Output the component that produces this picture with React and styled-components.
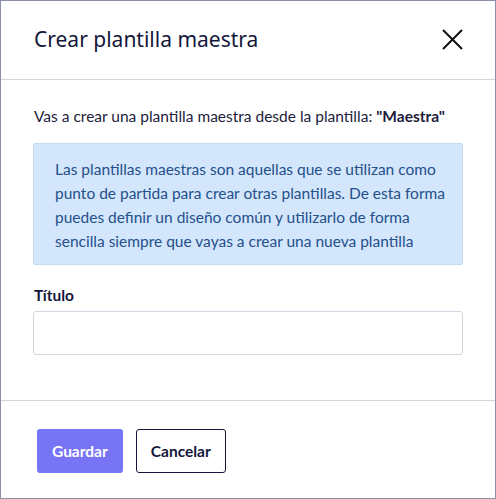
import React from "react"
import styled, { createGlobalStyle } from "styled-components"

const Global = createGlobalStyle`
  html, body {
    margin: 0;
    padding: 0;
    background: #ffffff;
  }
  * {
    box-sizing: border-box;
  }
`

const Modal = styled.div`
  width: 496px;
  height: 499px;
  border: 1px solid #8a8fa8;
  background: #ffffff;
  display: flex;
  flex-direction: column;
  font-family: "Lato", "Liberation Sans", sans-serif;
  color: #1b1d3a;
`

const Header = styled.div`
  height: 79px;
  flex: none;
  display: flex;
  align-items: center;
  justify-content: space-between;
  padding: 0 31px 2px 33px;
  border-bottom: 1px solid #d3d4e0;
`

const Title = styled.h1`
  margin: 0;
  font-family: "Noto Sans", sans-serif;
  font-weight: 400;
  font-size: 21px;
  color: #14173b;
`

const Close = styled.button`
  width: 24px;
  height: 24px;
  padding: 0;
  border: none;
  background: none;
  display: flex;
  align-items: center;
  justify-content: center;
  cursor: pointer;
`

const Body = styled.div`
  flex: 1;
  padding: 26px 32px 0 32px;
  border-bottom: 1px solid #d3d4e0;
`

const Intro = styled.p`
  margin: 0 0 17px 1px;
  font-size: 15.5px;
  line-height: 20px;
  color: #1b1d3a;

  b {
    font-weight: 700;
  }
`

const Info = styled.div`
  background: #d3e6fc;
  border: 1px solid #c3dbf7;
  border-radius: 2px;
  padding: 13px 4px 11px 21px;
  font-size: 15.5px;
  line-height: 24px;
  color: #24508a;
  white-space: nowrap;
`

const Label = styled.label`
  display: block;
  margin: 21px 0 7px 1px;
  font-size: 15.5px;
  font-weight: 700;
  color: #14173b;
`

const Input = styled.input`
  display: block;
  width: 100%;
  height: 44px;
  border: 1px solid #d3d5e3;
  border-radius: 3px;
  padding: 0 12px;
  font-family: inherit;
  font-size: 15px;
  outline: none;
`

const Footer = styled.div`
  height: 97px;
  flex: none;
  display: flex;
  align-items: flex-start;
  gap: 13px;
  padding: 28px 36px 0 36px;
`

const Button = styled.button`
  height: 44px;
  padding: 0 ${p => (p.$primary ? "15px" : "14px")};
  border-radius: 3px;
  font-family: "Lato", "Liberation Sans", sans-serif;
  font-size: 15.5px;
  font-weight: 700;
  cursor: pointer;
  background: ${p => (p.$primary ? "#7774f5" : "#ffffff")};
  color: ${p => (p.$primary ? "#ffffff" : "#14173b")};
  border: ${p => (p.$primary ? "none" : "1.5px solid #14173b")};
`

export default function App() {
  return (
    <>
      <Global />
      <Modal>
        <Header>
          <Title>Crear plantilla maestra</Title>
          <Close aria-label="Cerrar">
            <svg width="21" height="21" viewBox="0 0 21 21">
              <path d="M1 1 L20 20 M20 1 L1 20" stroke="#111" strokeWidth="2" fill="none" />
            </svg>
          </Close>
        </Header>
        <Body>
          <Intro>
            Vas a crear una plantilla maestra desde la plantilla: <b>"Maestra"</b>
          </Intro>
          <Info>
            Las plantillas maestras son aquellas que se utilizan como
            <br />
            punto de partida para crear otras plantillas. De esta forma
            <br />
            puedes definir un diseño común y utilizarlo de forma
            <br />
            sencilla siempre que vayas a crear una nueva plantilla
          </Info>
          <Label htmlFor="titulo">Título</Label>
          <Input id="titulo" type="text" />
        </Body>
        <Footer>
          <Button $primary>Guardar</Button>
          <Button>Cancelar</Button>
        </Footer>
      </Modal>
    </>
  )
}
